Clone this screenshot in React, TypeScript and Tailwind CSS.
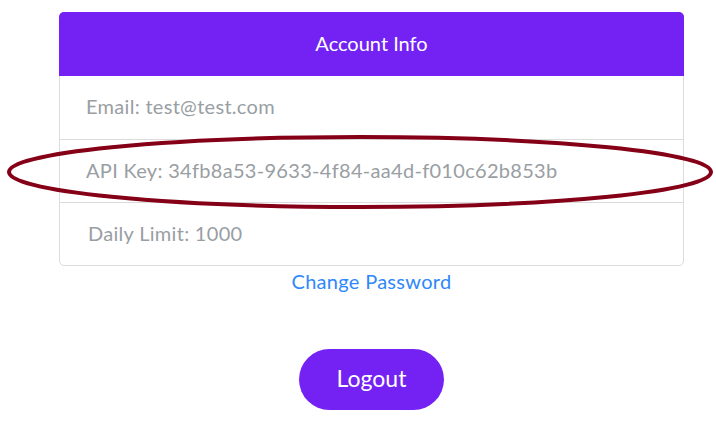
import React from 'react'

const rows = [
  'Email: test@test.com',
  'API Key: 34fb8a53-9633-4f84-aa4d-f010c62b853b',
  'Daily Limit: 1000',
]

export default function App() {
  return (
    <main
      className="relative w-[716px] h-[428px] bg-white overflow-hidden"
      style={{ fontFamily: 'Lato, "Open Sans", sans-serif' }}
    >
      <div className="ml-[59px] w-[625px] pt-[12px] flex flex-col items-center">
        {/* Account card */}
        <div className="w-full rounded-[5px] border border-[#dcdcdc] bg-white">
          <div className="h-[64px] -mx-px -mt-px pb-[2px] rounded-t-[5px] bg-[#7322f3] flex items-center justify-center text-white text-[20px]">
            Account Info
          </div>
          {rows.map((row, i) => (
            <div
              key={row}
              className={`h-[63px] flex items-center pr-[26px] pb-[3px] text-[20px] tracking-[0.3px] text-[#999ea3] ${i === 2 ? 'pl-[28px]' : 'pl-[26px]'} ${i > 0 ? 'border-t border-[#dcdcdc]' : ''}`}
            >
              {row}
            </div>
          ))}
        </div>

        <a className="mt-[1px] text-[20px] tracking-[0.3px] text-[#2f88fb] leading-[28px]">Change Password</a>

        <button className="mt-[54px] w-[145px] h-[61px] pb-[2px] rounded-full bg-[#7322f3] text-white text-[23px]">
          Logout
        </button>
      </div>

      {/* hand-drawn highlight */}
      <svg className="absolute left-0 top-0 pointer-events-none" width="716" height="428">
        <ellipse cx="360" cy="172" rx="351" ry="35" fill="none" stroke="#850017" strokeWidth="4" />
      </svg>
    </main>
  )
}
